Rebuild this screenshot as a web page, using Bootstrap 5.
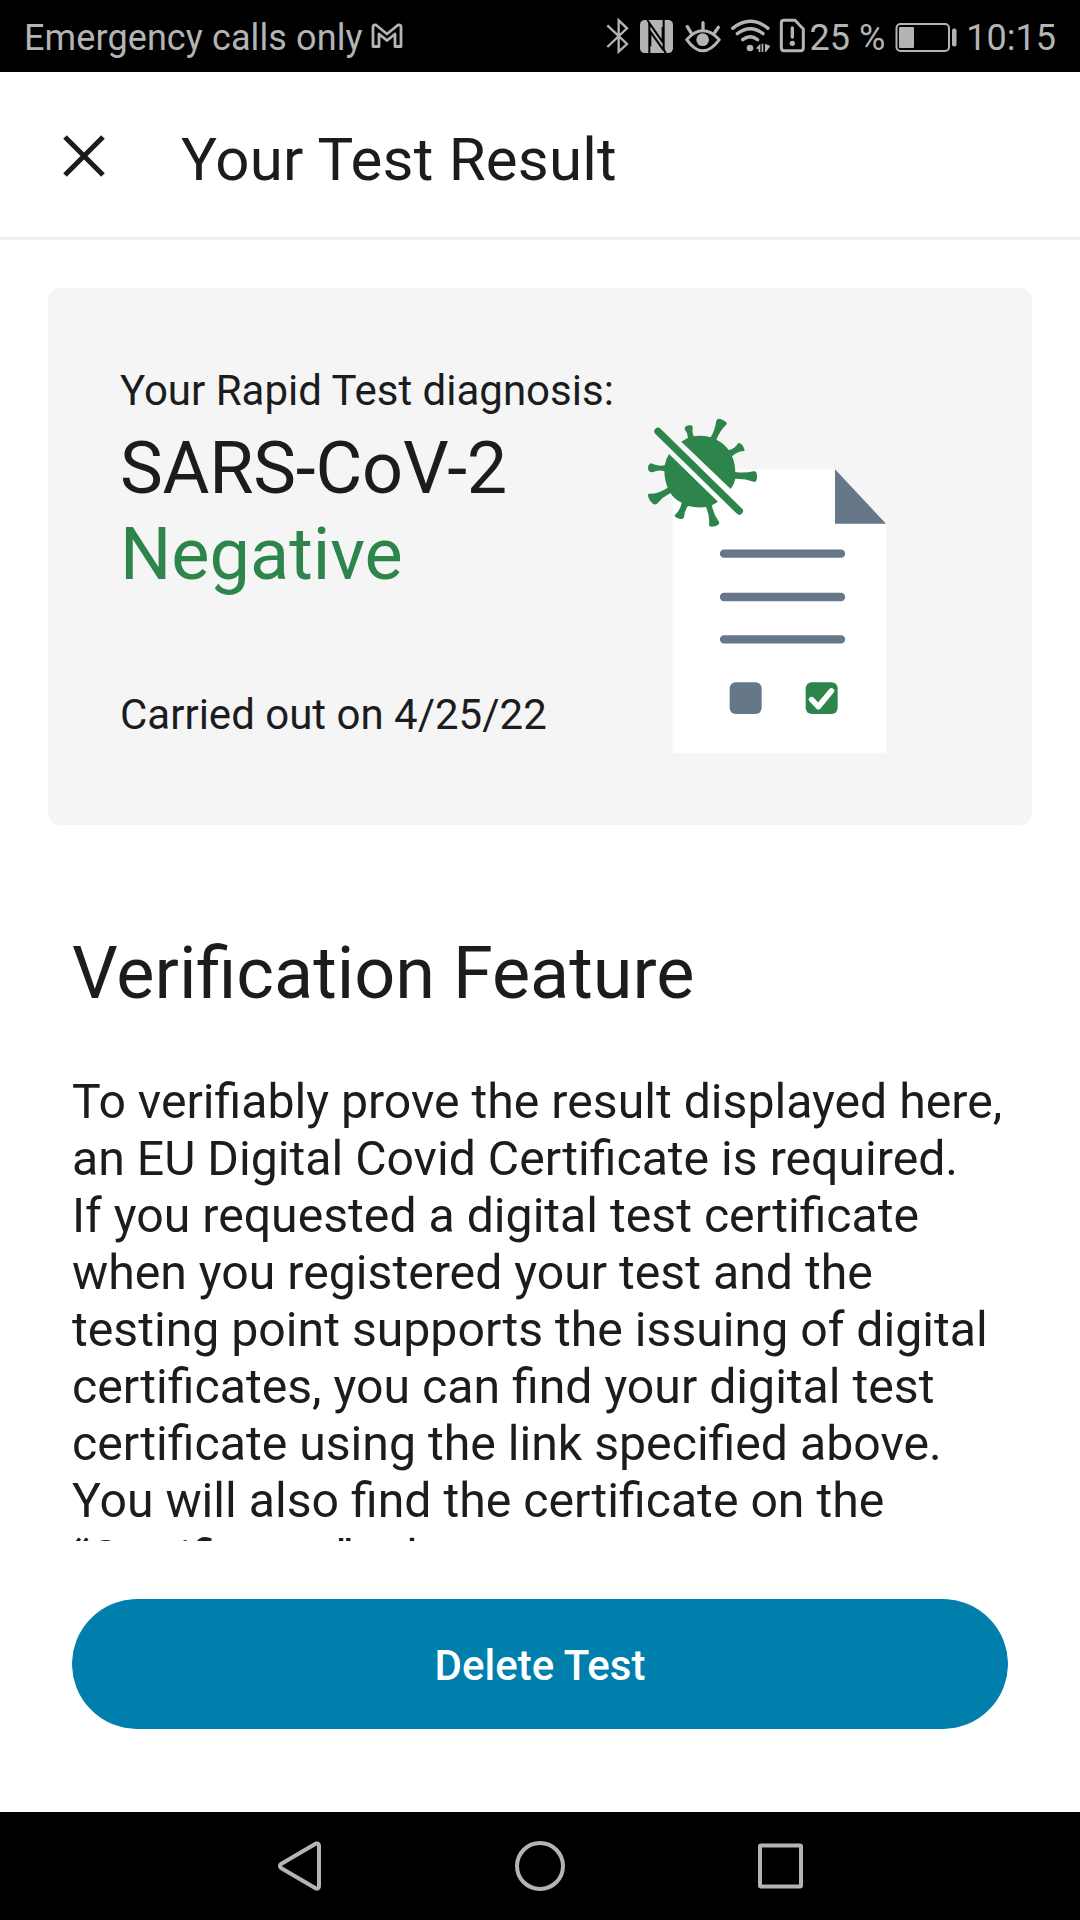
<!DOCTYPE html>
<html lang="en">
<head>
<meta charset="utf-8">
<meta name="viewport" content="width=device-width, initial-scale=1">
<title>Your Test Result</title>
<link href="https://cdn.jsdelivr.net/npm/bootstrap@5.3.0/dist/css/bootstrap.min.css" rel="stylesheet">
<style>
  body { font-family: Roboto, sans-serif; color: #1b1c1e; }
  .screen { width: 1080px; height: 1920px; }
  .status-bar { height: 72px; padding: 4px 24px 0 24px; font-size: 36px; line-height: 68px; color: #b3b5b4; }
  .status-bar svg { margin-top: -4px; }
  .carrier { letter-spacing: .1px; }
  .pct { margin-left: 1px; }
  .battery { margin-left: 10px; }
  .clock { margin-left: 9px; }
  .app-bar { height: 168px; padding: 10px 62px 0; border-bottom: 3px solid #eee; }
  .app-bar h1 { font-size: 60px; line-height: 72px; margin: 0 0 0 75px; font-weight: 400; letter-spacing: .2px; }
  .close-btn { width: 44px; height: 44px; margin-top: -8px; }
  .result-card { margin: 48px 48px 0; height: 537px; background: #f5f5f5; border-radius: 12px; padding: 78px 0 0 72px; }
  .label-text { font-size: 42px; line-height: 50px; }
  .result-text { font-size: 72px; line-height: 86px; }
  .virus-name { margin-top: 10px; letter-spacing: -.25px; }
  .negative { color: #2e854b; }
  .carried { margin-top: 92px; }
  .illustration { margin: 34px 132px 0 0; }
  .scroll-area { height: 1301px; }
  .info { padding: 106px 72px 0; }
  .info h2 { font-size: 72px; line-height: 86px; margin: 0 0 56px; font-weight: 400; }
  .info p { font-size: 48.2px; line-height: 57px; }
  .action-area { padding: 58px 72px 0; height: 271px; }
  .btn-delete { --bs-btn-bg: #007fad; --bs-btn-border-color: #007fad; --bs-btn-color: #fff; height: 130px; padding-top: 8px; font-size: 42px; font-weight: 500; }
  .nav-bar { height: 108px; }
</style>
</head>
<body>
<div class="screen d-flex flex-column overflow-hidden bg-white">
  <div class="status-bar bg-black d-flex align-items-center flex-shrink-0 text-nowrap">
    <span class="carrier">Emergency calls only</span>
    <svg class="ms-2" width="32" height="26" viewBox="0 0 32 26" fill="none" stroke="#b3b5b4" stroke-width="2.800" stroke-linejoin="round"><path d="M2 4Q2 1.500 5 2L16 11 27 2Q30 1.500 30 4V23.500H24V11L16 17.500 8 11V23.500H2Z"/></svg>
    <div class="d-flex align-items-center ms-auto">
      <!-- bluetooth, NFC, eye comfort, wifi, SIM alert -->
      <svg width="206" height="72" viewBox="39 0 618 216" fill="none" stroke="#b3b5b4" stroke-width="8">
        <path d="M52 76L111 132 86 155V61L111 85 52 141" stroke-width="7"/>
        <rect x="150" y="60" width="99" height="99" rx="14" fill="#b3b5b4" stroke="none"/>
        <path d="M178 159V76Q178 66 172 59M177 68L218 126V81M221 60V144Q221 153 228 160M221 151L181 95V139" stroke="#000" stroke-width="6"/>
        <path d="M290 119Q338 66 388 119Q338 186 290 119Z" stroke-width="9" stroke-linejoin="round"/>
        <circle cx="338" cy="119" r="19" fill="#b3b5b4" stroke="none"/>
        <path d="M339 68V88M292 80L303 98M385 82L374 98" stroke-width="10" stroke-linecap="round"/>
        <path d="M428 85Q481 43 534 85M442 101Q481 71 519 101M458 119Q481 101 503 119" stroke-width="10" stroke-linecap="round"/>
        <circle cx="480" cy="144" r="10" fill="#b3b5b4" stroke="none"/>
        <path d="M498 145L511 131V156H506V148ZM515 131H520V156H515ZM525 131L541 138 528 156H525Z" fill="#b3b5b4" stroke="none"/>
        <path d="M582 61H615L640 87V144Q640 152 632 152H582Q574 152 574 144V69Q574 61 582 61Z" stroke-width="9"/>
        <path d="M607 84V111" stroke-width="10" stroke-linecap="round"/><circle cx="607" cy="130" r="8" fill="#b3b5b4" stroke="none"/>
      </svg>
      <span class="pct">25 %</span>
      <svg class="battery" width="62" height="72" viewBox="0 0 62 72"><rect x="1.500" y="24" width="52.500" height="27" rx="4" fill="none" stroke="#b3b5b4" stroke-width="2"/><rect x="4" y="27" width="15" height="21" rx="1" fill="#b3b5b4"/><rect x="57" y="28.500" width="4.500" height="18" rx="2" fill="#b3b5b4"/></svg>
      <span class="clock">10:15</span>
    </div>
  </div>

  <header class="app-bar d-flex align-items-center flex-shrink-0">
    <svg class="close-btn" viewBox="0 0 44 44" stroke="#1b1c1e" stroke-width="5"><path d="M3 3L41 41M41 3L3 41"/></svg>
    <h1>Your Test Result</h1>
  </header>

  <main class="scroll-area overflow-hidden flex-shrink-0">
    <section class="result-card d-flex justify-content-between align-items-start">
      <div>
        <div class="label-text">Your Rapid Test diagnosis:</div>
        <div class="result-text virus-name">SARS-CoV-2</div>
        <div class="result-text negative">Negative</div>
        <div class="label-text carried">Carried out on 4/25/22</div>
      </div>
      <svg class="illustration" width="270" height="370" viewBox="0 0 810 1110">
        <path d="M128 208H616L769 370V1058H128Z" fill="#fff"/>
        <path d="M615 208L768 371H615Z" fill="#657788"/>
        <path d="M282 461H633M282 591H633M282 718H633" stroke="#657788" stroke-width="25" stroke-linecap="round"/>
        <rect x="299" y="847" width="96" height="95" rx="18" fill="#657788"/>
        <rect x="527" y="847" width="96" height="95" rx="18" fill="#2e854b"/>
        <path d="M545 899L565 920 604 873" fill="none" stroke="#fff" stroke-width="17" stroke-linecap="round" stroke-linejoin="round"/>
        <g fill="#2e854b">
          <path d="M154 125L174 113Q174 100 164 88Q163 78 177 76Q190 74 188 84Q185 98 191 109Q216 105 242 112Q255 90 259 62Q262 53 277 59Q294 67 290 73Q270 92 259 119Q282 130 296 150Q315 146 323 131Q328 126 337 136Q345 147 343 153Q324 153 306 169Q315 188 316 216Q342 220 371 214Q381 213 381 229Q381 246 373 246Q344 235 316 236Q313 252 302 267Z"/>
          <path d="M117 162L264 305L246 316Q249 341 267 365Q271 374 255 379Q238 383 237 376Q240 348 228 321Q201 325 174 318Q163 333 162 352Q160 359 148 356Q133 352 134 346Q150 332 155 308Q133 298 121 279Q98 291 81 311Q72 318 61 303Q50 287 56 281Q86 282 113 263Q104 242 103 214Q88 208 67 217Q55 217 54 204Q54 192 64 190Q83 200 104 196Q107 178 117 162Z"/>
        </g>
        <path d="M84 94L328 333" stroke="#2e854b" stroke-width="22" stroke-linecap="round"/>
      </svg>
    </section>
    <section class="info">
      <h2>Verification Feature</h2>
      <p class="m-0 text-nowrap">To verifiably prove the result displayed here,<br>an EU Digital Covid Certificate is required.<br>If you requested a digital test certificate<br>when you registered your test and the<br>testing point supports the issuing of digital<br>certificates, you can find your digital test<br>certificate using the link specified above.<br>You will also find the certificate on the<br>“Certificates” tab.</p>
    </section>
  </main>

  <div class="action-area flex-shrink-0">
    <button type="button" class="btn btn-delete rounded-pill w-100">Delete Test</button>
  </div>

  <nav class="nav-bar bg-black d-flex flex-shrink-0 justify-content-center">
    <svg width="540" height="108" viewBox="270 0 540 108" fill="none" stroke="#b3b5b4" stroke-width="4" stroke-linejoin="round"><path d="M281 52Q279 54 281 56L316 76.500Q319 77 319 74V34Q319 31 316 31.500Z"/><circle cx="540" cy="54" r="23"/><rect x="760" y="33.500" width="41" height="41" rx="1"/></svg>
  </nav>
</div>
<script src="https://cdn.jsdelivr.net/npm/bootstrap@5.3.0/dist/js/bootstrap.bundle.min.js"></script>
</body>
</html>
